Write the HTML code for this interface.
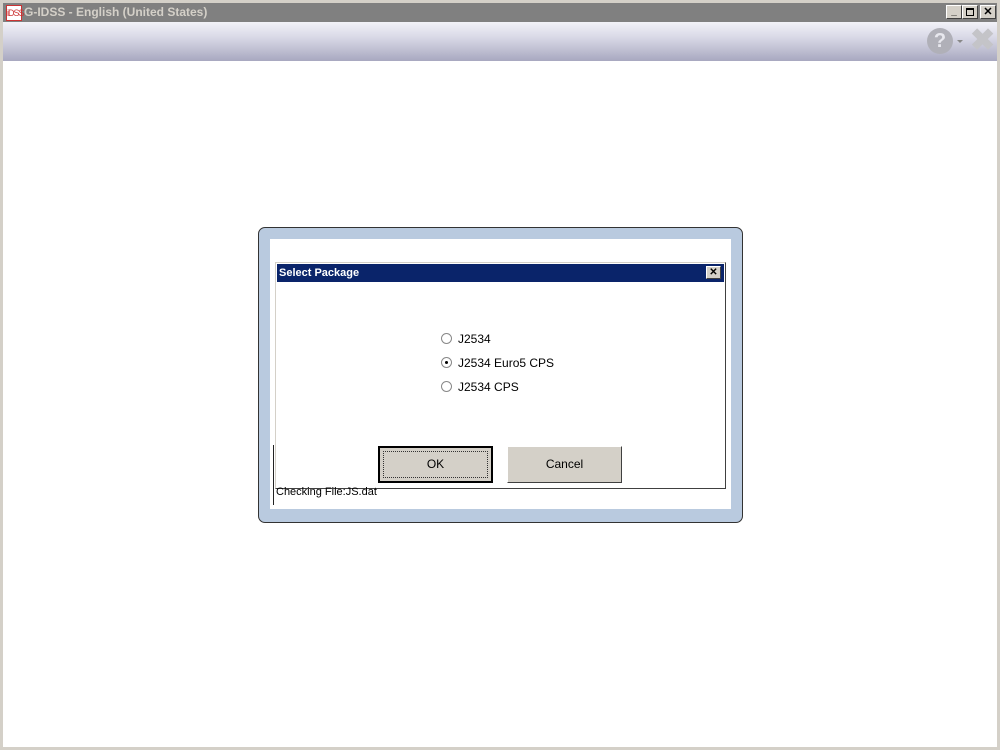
<!DOCTYPE html>
<html><head><style>
*{margin:0;padding:0;box-sizing:border-box}
body{width:1000px;height:750px;background:#fff;position:relative;overflow:hidden;font-family:"Liberation Sans",Arial,sans-serif}
.abs{position:absolute}
</style></head><body>
<div class="abs" style="left:0;top:0;width:1000px;height:750px;border:3px solid #d4d0c8;border-top:3px solid #d4d0c8"></div>
<div class="abs" style="left:3px;top:3px;width:994px;height:19px;background:#808080"></div>
<div class="abs" style="left:6px;top:5px;width:16px;height:16px;background:#fff;border:1px solid #c33;color:#c33;font-size:9px;line-height:14px;text-align:center;letter-spacing:-1px">iDSS</div>
<div class="abs" style="left:24px;top:4px;color:#d4d0c8;font-size:12px;font-weight:bold;line-height:16px">G-IDSS - English (United States)</div>
<div class="abs" style="left:946px;top:5px;width:16px;height:14px;background:#d4d0c8;border:1px solid;border-color:#fff #404040 #404040 #fff;font-size:10px;text-align:center;line-height:12px;font-weight:bold">_</div>
<div class="abs" style="left:962px;top:5px;width:16px;height:14px;background:#d4d0c8;border:1px solid;border-color:#fff #404040 #404040 #fff"><div style="margin:2px 3px;width:8px;height:8px;border:1px solid #000;border-top-width:2px"></div></div>
<div class="abs" style="left:980px;top:5px;width:16px;height:14px;background:#d4d0c8;border:1px solid;border-color:#fff #404040 #404040 #fff;font-size:11px;text-align:center;line-height:12px;font-weight:bold">✕</div>
<div class="abs" style="left:3px;top:22px;width:994px;height:39px;background:linear-gradient(#f2f2f8,#d8d8e6 40%,#a8a8c0)"></div>
<div class="abs" style="left:927px;top:28px;width:26px;height:26px;border-radius:50%;background:#b0b0b8;color:#e8e8ee;font-weight:bold;font-size:20px;text-align:center;line-height:26px">?</div>
<div class="abs" style="left:957px;top:40px;width:0;height:0;border-left:3px solid transparent;border-right:3px solid transparent;border-top:3px solid #888"></div>
<div class="abs" style="left:970px;top:26px;color:#c4c4c8;font-size:30px;font-weight:bold;line-height:30px">✖</div>
<div class="abs" style="left:258px;top:227px;width:485px;height:296px;background:#b9cadf;border:1px solid #333;border-radius:7px"></div>
<div class="abs" style="left:270px;top:239px;width:461px;height:270px;background:#fff"></div>
<div class="abs" style="left:273px;top:445px;width:1px;height:60px;background:#222"></div>
<div class="abs" style="left:275px;top:262px;width:451px;height:227px;background:#fff;border:1px solid;border-color:#d4d0c8 #404040 #404040 #d4d0c8"></div>
<div class="abs" style="left:277px;top:264px;width:447px;height:18px;background:#0a246a;color:#fff;font-size:11px;font-weight:bold;line-height:18px;padding-left:2px">Select Package</div>
<div class="abs" style="left:706px;top:266px;width:15px;height:13px;background:#d4d0c8;border:1px solid;border-color:#fff #404040 #404040 #fff;font-size:10px;font-weight:bold;text-align:center;line-height:11px">✕</div>
<div class="abs" style="left:441px;top:332px;font-size:12px;line-height:14px;color:#000">
<div style="height:24px"><span style="display:inline-block;width:11px;height:11px;border-radius:50%;border:1px solid #888;vertical-align:-1px;margin-right:6px"></span>J2534</div>
<div style="height:24px"><span style="display:inline-block;width:11px;height:11px;border-radius:50%;border:1px solid #888;vertical-align:-1px;margin-right:6px;position:relative"><span style="position:absolute;left:3px;top:3px;width:3px;height:3px;border-radius:50%;background:#000"></span></span>J2534 Euro5 CPS</div>
<div style="height:24px"><span style="display:inline-block;width:11px;height:11px;border-radius:50%;border:1px solid #888;vertical-align:-1px;margin-right:6px"></span>J2534 CPS</div>
</div>
<div class="abs" style="left:378px;top:446px;width:115px;height:37px;background:#d4d0c8;border:2px solid #000;font-size:12px;text-align:center;line-height:33px"><div style="position:absolute;left:3px;top:3px;right:3px;bottom:3px;border:1px dotted #333"></div>OK</div>
<div class="abs" style="left:507px;top:446px;width:115px;height:37px;background:#d4d0c8;border:1px solid;border-color:#fff #404040 #404040 #fff;font-size:12px;text-align:center;line-height:35px">Cancel</div>
<div class="abs" style="left:276px;top:486px;font-size:11px;line-height:12px;color:#000">Checking File:JS.dat</div>
</body></html>
